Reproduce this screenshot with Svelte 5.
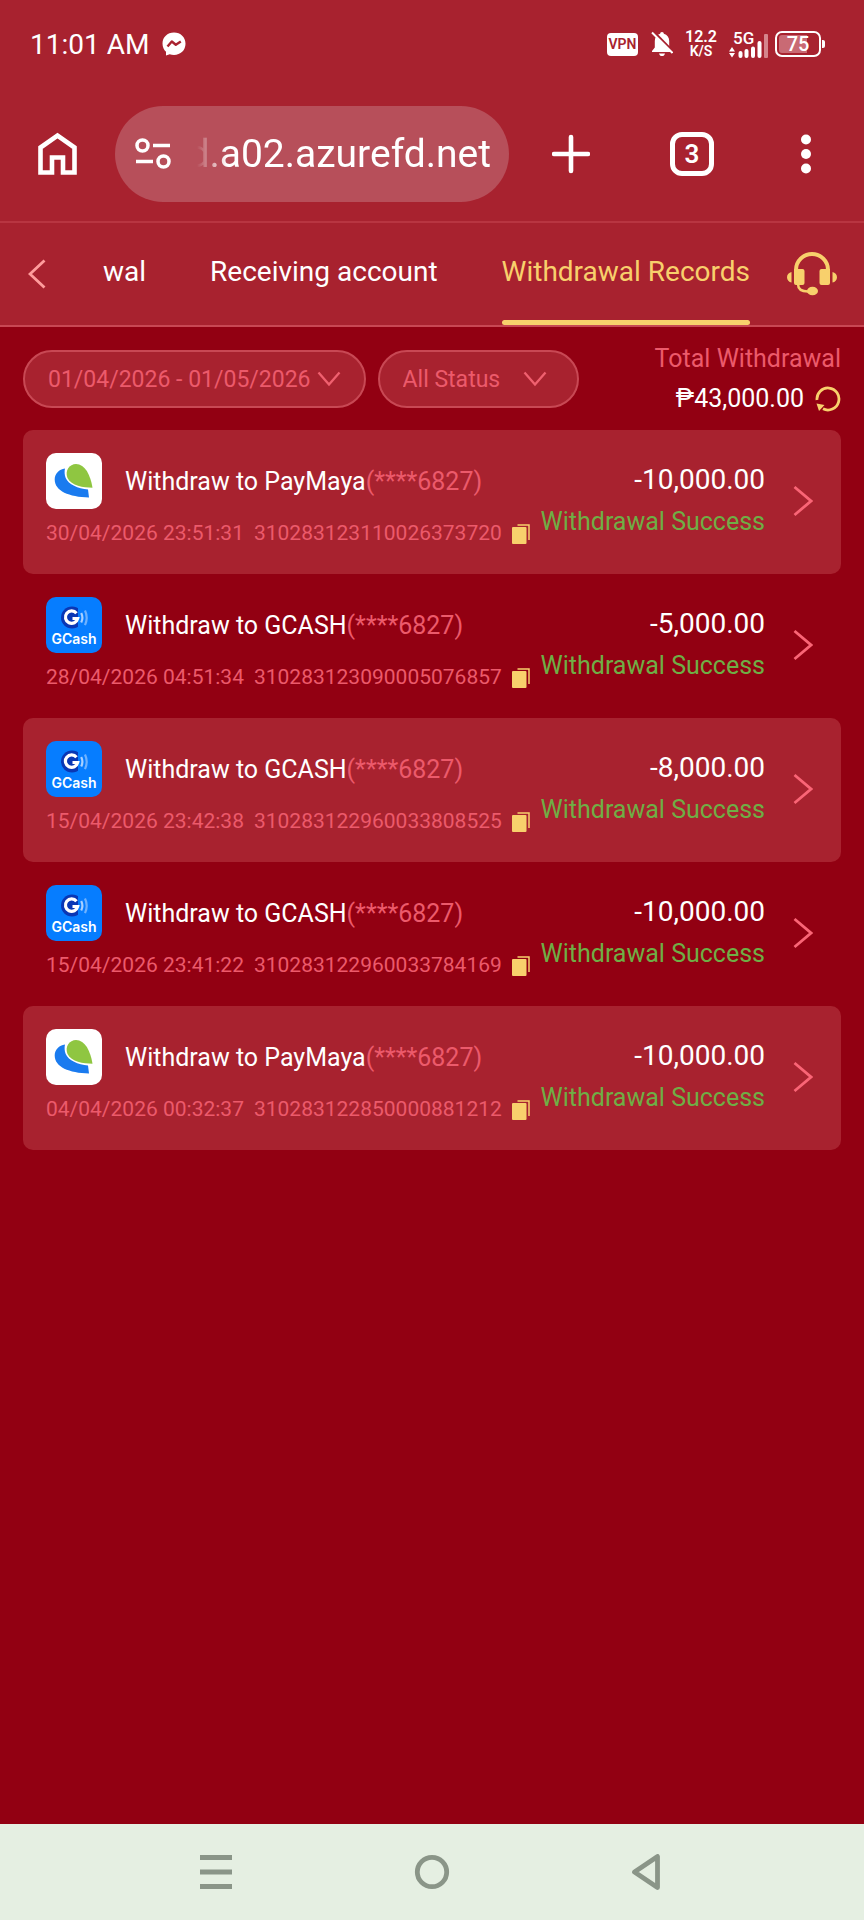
<script lang="ts">
	type Wallet = 'PayMaya' | 'GCASH';

	interface WithdrawalRecord {
		id: string;
		wallet: Wallet;
		account: string;
		time: string;
		amount: string;
	}

	const tabs = ['wal', 'Receiving account', 'Withdrawal Records'];
	let activeTab = $state('Withdrawal Records');
	let address = $state('d.a02.azurefd.net');

	const records: WithdrawalRecord[] = [
		{
			id: '310283123110026373720',
			wallet: 'PayMaya',
			account: '(****6827)',
			time: '30/04/2026 23:51:31',
			amount: '-10,000.00'
		},
		{
			id: '310283123090005076857',
			wallet: 'GCASH',
			account: '(****6827)',
			time: '28/04/2026 04:51:34',
			amount: '-5,000.00'
		},
		{
			id: '310283122960033808525',
			wallet: 'GCASH',
			account: '(****6827)',
			time: '15/04/2026 23:42:38',
			amount: '-8,000.00'
		},
		{
			id: '310283122960033784169',
			wallet: 'GCASH',
			account: '(****6827)',
			time: '15/04/2026 23:41:22',
			amount: '-10,000.00'
		},
		{
			id: '310283122850000881212',
			wallet: 'PayMaya',
			account: '(****6827)',
			time: '04/04/2026 00:32:37',
			amount: '-10,000.00'
		}
	];

	function copyId(id: string) {
		navigator.clipboard?.writeText(id);
	}
</script>

<div class="screen">
	<div class="status-bar">
		<span class="clock">11:01 AM</span>
		<svg width="24" height="24" viewBox="0 0 24 24">
			<path d="M12 .5C5.400 .5.500 5.200.500 11.500c0 3.500 1.400 6.300 3.500 8.300V23.500l3.700-1.200c1.300.4 2.700.6 4.300.6 6.600 0 11.500-4.700 11.500-11.200S18.600.5 12 .5z" fill="#fff" />
			<path d="M5.500 14.500l4.300-5 4 3.200 5-3.200" fill="none" stroke="#a8222f" stroke-width="2.400" stroke-linejoin="round" />
		</svg>
		<div class="indicators">
			<span class="vpn">VPN</span>
			<svg class="bell" width="22" height="26" viewBox="0 0 22 26">
				<path d="M11 1c1.200 0 1.800.8 1.800 1.800 3.500.9 5.400 3.700 5.400 7.200v6.500l2.300 3.500v1H1v-1l2.800-3.500V10c0-3.500 1.900-6.300 5.400-7.200C9.200 1.800 9.800 1 11 1z" fill="#fff" />
				<path d="M8 22.500h6c-.4 1.600-1.500 2.600-3 2.600s-2.600-1-3-2.600z" fill="#fff" />
				<path d="M1 -1l23 23.500" stroke="#a8222f" stroke-width="2.500" />
				<path d="M1 1.500l20.500 20.500" stroke="#fff" stroke-width="2" />
			</svg>
			<span class="speed"><b>12.2</b><small>K/S</small></span>
			<svg class="signal" width="39" height="28" viewBox="0 0 39 28">
				<text x="4" y="14" fill="#fff">5G</text>
				<path d="M0 21.500l3-4.500 3 4.500zM0 23l3 4.500 3-4.500z" fill="#fff" />
				<path d="M11.500 23V26M17.500 21V26M24 18.500V26M30.500 13V26" stroke="#fff" stroke-width="4" stroke-linecap="round" />
				<rect x="35" y="4" width="4" height="24" rx="1" fill="#d5858c" />
			</svg>
			<span class="battery">75</span>
		</div>
	</div>

	<div class="toolbar">
		<button aria-label="Home">
			<svg width="40" height="44" viewBox="0 0 40 44">
				<path d="M3.500 40.500V15.500L20.500 3.500l17 12V40.500H26V25.500H15V40.500z" fill="none" stroke="#fff" stroke-width="4.600" />
			</svg>
		</button>
		<div class="address">
			<svg width="36" height="32" viewBox="0 0 36 32" fill="none" stroke="#fff" stroke-width="3.500">
				<circle cx="7.500" cy="7.500" r="5.500" />
				<path d="M18 7.500h17M1 23.500h17" />
				<circle cx="28.500" cy="23.500" r="5.500" />
			</svg>
			<input type="text" aria-label="Address" bind:value={address} />
		</div>
		<div class="actions">
			<button aria-label="New tab">
				<svg width="38" height="40" viewBox="0 0 38 40">
					<path d="M19 3v34M2 20h34" stroke="#fff" stroke-width="4.600" stroke-linecap="round" />
				</svg>
			</button>
			<button class="tab-count">3</button>
			<button aria-label="Menu">
				<svg width="24" height="40" viewBox="0 0 24 40" fill="#fff">
					<circle cx="12" cy="5.500" r="5" />
					<circle cx="12" cy="20" r="5" />
					<circle cx="12" cy="34.500" r="5" />
				</svg>
			</button>
		</div>
	</div>

	<header class="page-head">
		<button aria-label="Back">
			<svg width="18" height="30" viewBox="0 0 18 30">
				<path d="M16.500 1.500L2 15l14.500 13.500" fill="none" stroke="#ff9c9c" stroke-width="2.800" />
			</svg>
		</button>
		<nav>
			{#each tabs as tab (tab)}
				<button class="tab" class:active={tab === activeTab} onclick={() => (activeTab = tab)}>{tab}</button>
			{/each}
		</nav>
		<button aria-label="Support">
			<svg width="50" height="44" viewBox="0 0 50 44">
				<path d="M9 22V18a16 16 0 0 1 32 0v4" fill="none" stroke="#f8d06c" stroke-width="4" />
				<path d="M7 17h8.500a2 2 0 0 1 2 2V31a2 2 0 0 1-2 2H9a2 2 0 0 1-2-2zM34.500 17H43V31a2 2 0 0 1-2 2h-6.500a2 2 0 0 1-2-2V19a2 2 0 0 1 2-2z" fill="#f8d06c" />
				<path d="M4.500 20v10.500C2 30 0 28 0 25.200S2 20.500 4.500 20zM45.500 20v10.500c2.500-.5 4.500-2.500 4.500-5.300s-2-4.700-4.500-5.200z" fill="#f8d06c" />
				<path d="M11 32c0 5 3 7.500 10 7.500" fill="none" stroke="#f8d06c" stroke-width="2.500" />
				<ellipse cx="25.500" cy="39" rx="5.500" ry="4.300" fill="#f8d06c" />
			</svg>
		</button>
	</header>

	<main>
		<div class="filters">
			<button class="pill date">
				01/04/2026 - 01/05/2026
				<svg width="24" height="16" viewBox="0 0 24 16">
					<path d="M1.500 1.500L12 13.500l10.500-12" fill="none" stroke="#f0606f" stroke-width="2.300" />
				</svg>
			</button>
			<div class="pill status">
				<select aria-label="Status">
					<option>All Status</option>
				</select>
				<svg width="24" height="16" viewBox="0 0 24 16">
					<path d="M1.500 1.500L12 13.500l10.500-12" fill="none" stroke="#f0606f" stroke-width="2.300" />
				</svg>
			</div>
			<div class="total">
				<span class="muted">Total Withdrawal</span>
				<span class="sum">
					₱43,000.00
					<button aria-label="Refresh">
						<svg width="26" height="26" viewBox="0 0 26 26">
							<path d="M2 14A11 11 0 1 1 8 22.800" fill="none" stroke="#f8d06c" stroke-width="2.800" />
							<path d="M1.500 17.500l8 1.500-5.500 6z" fill="#f8d06c" />
						</svg>
					</button>
				</span>
			</div>
		</div>

		<ul class="records">
			{#each records as record (record.id)}
				<li>
					<div class="info">
						<div class="title">
							{#if record.wallet === 'PayMaya'}
								<svg width="56" height="56" viewBox="0 0 56 56">
									<rect width="56" height="56" rx="10" fill="#fff" />
									<path d="M19 15.500C13 16 8.700 21 8.700 26.500 8.700 38 23 44 43 44.500L42 36.500C32 35.500 22.500 31.500 19.700 25 18.500 22 18.300 18.500 19 15.500z" fill="#1a7bef" />
									<path d="M21.500 25C18.500 17.500 23.500 11 30 11c9 0 14.500 11 16.500 23.800C37 34.500 25.500 33 21.500 25z" fill="#8fc641" />
								</svg>
							{:else}
								<svg class="gcash" width="56" height="56" viewBox="0 0 56 56">
									<rect width="56" height="56" rx="10" fill="#067dff" />
									<circle cx="26" cy="20.500" r="11" fill="#0a37b5" />
									<path d="M32 8l6 5v15l-6 5z" fill="#067dff" />
									<path d="M30.500 16.300a6.200 6.200 0 1 0 1.200 5.200h-5.200" fill="none" stroke="#fff" stroke-width="3.200" />
									<path d="M35.200 16q2.400 4.800 0 9.600" fill="none" stroke="#a9d0ff" stroke-width="2.200" />
									<path d="M39 13.500q3.400 7.300 0 14.600" fill="none" stroke="#6fb2ff" stroke-width="2.200" />
									<text x="28" y="46.500" text-anchor="middle" fill="#fff">GCash</text>
								</svg>
							{/if}
							<span>Withdraw to {record.wallet}<span class="muted">{record.account}</span></span>
						</div>
						<div class="meta muted">
							<span>{record.time}</span>
							<span>{record.id}</span>
							<button aria-label="Copy order number" onclick={() => copyId(record.id)}>
								<svg width="18" height="22" viewBox="0 0 18 22">
									<path d="M5.500 3H17v15" fill="none" stroke="#f8d06c" stroke-width="1.500" />
									<rect y="5" width="14.500" height="17" rx="1" fill="#f8d06c" />
								</svg>
							</button>
						</div>
					</div>
					<div class="result">
						<span class="amount">{record.amount}</span>
						<span class="success">Withdrawal Success</span>
					</div>
					<button aria-label="Details">
						<svg width="20" height="32" viewBox="0 0 20 32">
							<path d="M1.500 2L18 16 1.500 30" fill="none" stroke="#fa6576" stroke-width="2.800" />
						</svg>
					</button>
				</li>
			{/each}
		</ul>
	</main>

	<footer class="nav-bar">
		<button aria-label="Recent apps">
			<svg width="36" height="36" viewBox="0 0 36 36">
				<path d="M2 3.500h32M2 18h32M2 32.500h32" stroke="#8a9588" stroke-width="4.800" />
			</svg>
		</button>
		<button aria-label="Home screen">
			<svg width="36" height="36" viewBox="0 0 36 36">
				<circle cx="18" cy="18" r="14.700" fill="none" stroke="#8a9588" stroke-width="4.800" />
			</svg>
		</button>
		<button aria-label="Go back">
			<svg width="36" height="36" viewBox="0 0 36 36">
				<path d="M27.500 2.500v31L4.500 18z" fill="none" stroke="#8a9588" stroke-width="4.800" stroke-linejoin="round" />
			</svg>
		</button>
	</footer>
</div>

<style>
	:global(body) {
		background: #920012;
	}

	.screen {
		display: flex;
		flex-direction: column;
		min-height: 100vh;
		background: #920012;
		color: #fff;
		font-family: Roboto, 'Liberation Sans', sans-serif;
	}

	button {
		padding: 0;
		border: 0;
		background: none;
		color: inherit;
		font: inherit;
		cursor: pointer;
	}

	svg {
		display: block;
		flex: none;
	}

	.muted {
		color: #ec5a6b;
	}

	/* phone status bar */
	.status-bar {
		display: flex;
		align-items: center;
		gap: 13px;
		box-sizing: border-box;
		height: 86px;
		padding: 2px 38px 0 30px;
		background: #a8222f;
	}

	.clock {
		font-size: 28px;
	}

	.indicators {
		display: flex;
		align-items: center;
		gap: 13px;
		margin-left: auto;
	}

	.vpn {
		width: 31px;
		border-radius: 4px;
		background: #fff;
		color: #a8222f;
		font-size: 14px;
		font-weight: 600;
		line-height: 23px;
		text-align: center;
	}

	.speed {
		display: flex;
		flex-direction: column;
		align-items: center;
		width: 30px;
		font-size: 16px;
		line-height: 15px;
	}

	.speed b {
		font-weight: 600;
	}

	.speed small {
		font-size: 14px;
		font-weight: 600;
	}

	.signal text {
		font-size: 17px;
		font-weight: 500;
	}

	.battery {
		position: relative;
		box-sizing: border-box;
		width: 46px;
		margin: 0 5px 0 -6px;
		border: 2px solid #fff;
		border-radius: 7px;
		background: linear-gradient(90deg, #c96a74 75%, transparent 75%) content-box;
		padding: 2px;
		font-size: 20px;
		font-weight: 500;
		line-height: 18px;
		text-align: center;
	}

	.battery::after {
		content: '';
		position: absolute;
		top: 7px;
		right: -6px;
		width: 3px;
		height: 8px;
		border-radius: 0 2px 2px 0;
		background: #fff;
	}

	/* browser toolbar */
	.toolbar {
		display: flex;
		align-items: center;
		gap: 38px;
		height: 135px;
		padding: 0 46px 0 37px;
		background: #a8222f;
	}

	.address {
		display: flex;
		flex: 1;
		align-items: center;
		gap: 12px;
		min-width: 0;
		height: 96px;
		box-sizing: border-box;
		padding: 0 18px 0 20px;
		border-radius: 48px;
		background: #b74f5a;
	}

	.address input {
		flex: 1;
		min-width: 0;
		padding: 0;
		border: 0;
		outline: 0;
		background: none;
		color: #fff;
		font: inherit;
		font-size: 39px;
		text-align: right;
		mask-image: linear-gradient(90deg, transparent 14px, #000 44px);
	}

	.actions {
		display: flex;
		align-items: center;
		gap: 80px;
		margin-left: 5px;
	}

	.tab-count {
		box-sizing: border-box;
		width: 44px;
		height: 44px;
		border: 5px solid #fff;
		border-radius: 12px;
		font-size: 26px;
		font-weight: 600;
		line-height: 34px;
	}

	/* page header */
	.page-head {
		display: flex;
		align-items: center;
		height: 102px;
		padding: 0 27px 0 28px;
		border-top: 2px solid #b83541;
		border-bottom: 2px solid #c84854;
		background: #a8222f;
	}

	nav {
		display: flex;
		align-self: stretch;
		gap: 64px;
		margin: 0 37px 0 auto;
	}

	.tab {
		border-bottom: 5px solid transparent;
		font-size: 28px;
		white-space: nowrap;
	}

	.tab.active {
		position: relative;
		color: #f8d06c;
	}

	.tab.active::after {
		content: '';
		position: absolute;
		right: 0;
		bottom: -5px;
		left: 0;
		height: 5px;
		border-radius: 3px;
		background: #f8d06c;
	}

	/* filters */
	main {
		flex: 1;
		padding: 0 23px;
	}

	.filters {
		display: flex;
		align-items: center;
		gap: 12px;
		padding: 12px 0 11px;
	}

	.pill {
		display: flex;
		align-items: center;
		box-sizing: border-box;
		height: 58px;
		padding: 0 23px;
		border: 2px solid #c84854;
		border-radius: 29px;
		background: #a8222f;
		color: #ec5a6b;
		font-size: 23px;
		white-space: nowrap;
	}

	.date {
		gap: 6px;
	}

	.status {
		gap: 22px;
		padding-right: 30px;
	}

	.status select {
		appearance: none;
		padding: 0;
		border: 0;
		outline: 0;
		background: none;
		color: inherit;
		font: inherit;
	}

	.total {
		display: flex;
		flex-direction: column;
		align-items: flex-end;
		margin-left: auto;
		font-size: 25px;
		line-height: 40px;
		white-space: nowrap;
	}

	.sum {
		display: flex;
		align-items: center;
		gap: 11px;
	}

	/* records */
	.records {
		margin: 0;
		padding: 0;
		list-style: none;
	}

	.records li {
		display: flex;
		align-items: center;
		padding: 23px 28px 25px 23px;
		border-radius: 10px;
	}

	.records li:nth-child(odd) {
		background: #a8222f;
	}

	.info {
		flex: 1;
		min-width: 0;
	}

	.title {
		display: flex;
		align-items: center;
		gap: 23px;
		font-size: 25px;
		white-space: nowrap;
	}

	.gcash text {
		font-family: Inter, sans-serif;
		font-size: 14px;
		font-weight: 600;
	}

	.meta {
		display: flex;
		align-items: center;
		gap: 10px;
		margin-top: 8px;
		font-size: 21px;
		line-height: 32px;
		white-space: nowrap;
	}

	.result {
		display: flex;
		flex-direction: column;
		align-items: flex-end;
		margin-right: 28px;
		line-height: 42px;
		white-space: nowrap;
	}

	.amount {
		font-size: 28px;
	}

	.success {
		color: #6fae45;
		font-size: 25px;
	}

	/* system navigation */
	.nav-bar {
		display: flex;
		align-items: center;
		justify-content: center;
		gap: 180px;
		height: 96px;
		background: #e5efe2;
	}
</style>
